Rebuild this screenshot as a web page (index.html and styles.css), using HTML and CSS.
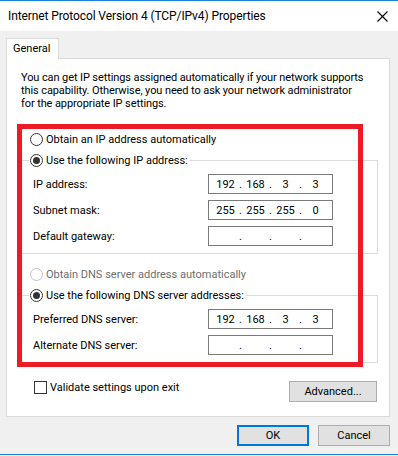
FILE: index.html
```html
<!DOCTYPE html>
<html lang="en">
<head>
    <meta charset="UTF-8">
    <title>Internet Protocol Version 4 (TCP/IPv4) Properties</title>
    <link rel="stylesheet" href="styles.css">
</head>
<body>
    <div class="window">
        <div class="titlebar">
            <span class="title">Internet Protocol Version 4 (TCP/IPv4) Properties</span>
            <svg class="close" width="11" height="11" viewBox="0 0 11 11">
                <path d="M0.5 0.5 L10.5 10.5 M10.5 0.5 L0.5 10.5" stroke="#000" stroke-width="1.1" fill="none"/>
            </svg>
        </div>

        <div class="dialog">
            <div class="tab">General</div>
            <div class="panel">
                <p class="intro">
                    You can get IP settings assigned automatically if your network supports<br>
                    this capability. Otherwise, you need to ask your network administrator<br>
                    for the appropriate IP settings.
                </p>

                <div class="opt opt-first">
                    <span class="radio"></span>Obtain an IP address automatically
                </div>

                <fieldset class="group">
                    <legend><span class="opt"><span class="radio on"></span>Use the following IP address:</span></legend>
                    <div class="field">
                        <span>IP address:</span>
                        <div class="ip"><span class="seg">192</span><span class="dot">.</span><span class="seg">168</span><span class="dot">.</span><span class="seg">3</span><span class="dot">.</span><span class="seg">3</span></div>
                    </div>
                    <div class="field">
                        <span>Subnet mask:</span>
                        <div class="ip"><span class="seg">255</span><span class="dot">.</span><span class="seg">255</span><span class="dot">.</span><span class="seg">255</span><span class="dot">.</span><span class="seg">0</span></div>
                    </div>
                    <div class="field">
                        <span>Default gateway:</span>
                        <div class="ip"><span class="seg"></span><span class="dot">.</span><span class="seg"></span><span class="dot">.</span><span class="seg"></span><span class="dot">.</span><span class="seg"></span></div>
                    </div>
                </fieldset>

                <div class="opt opt-dns disabled">
                    <span class="radio off"></span>Obtain DNS server address automatically
                </div>

                <fieldset class="group">
                    <legend><span class="opt"><span class="radio on"></span>Use the following DNS server addresses:</span></legend>
                    <div class="field">
                        <span>Preferred DNS server:</span>
                        <div class="ip"><span class="seg">192</span><span class="dot">.</span><span class="seg">168</span><span class="dot">.</span><span class="seg">3</span><span class="dot">.</span><span class="seg">3</span></div>
                    </div>
                    <div class="field">
                        <span>Alternate DNS server:</span>
                        <div class="ip"><span class="seg"></span><span class="dot">.</span><span class="seg"></span><span class="dot">.</span><span class="seg"></span><span class="dot">.</span><span class="seg"></span></div>
                    </div>
                </fieldset>

                <div class="extras">
                    <label class="check-label"><span class="check"></span>Validate settings upon exit</label>
                    <button class="btn btn-adv">Advanced...</button>
                </div>

                <div class="mark"></div>
            </div>

            <div class="footer">
                <button class="btn btn-main btn-default">OK</button>
                <button class="btn btn-main">Cancel</button>
            </div>
        </div>
    </div>
</body>
</html>
```

FILE: styles.css
```css
body {
    margin: 0;
    background: #f0f0f0;
    font-family: "Segoe UI", Roboto, "Liberation Sans", sans-serif;
    font-size: 11px;
    line-height: 13px;
    color: #000;
}

.window {
    height: 455px;
    box-sizing: border-box;
    border-top: 1px solid #1883d7;
    border-bottom: 1px solid #1883d7;
}

.titlebar {
    height: 30px;
    background: #fff;
    display: flex;
    align-items: center;
    justify-content: space-between;
    padding: 0 10px 0 8px;
}

.title {
    font-size: 12px;
    letter-spacing: -0.1px;
}

.dialog {
    padding: 7px 8px 0 6px;
}

.tab {
    position: relative;
    z-index: 1;
    width: 53px;
    height: 21px;
    box-sizing: border-box;
    border: 1px solid #d9d9d9;
    border-bottom: 0;
    background: #fff;
    padding: 3px 0 0 6px;
    margin-bottom: -1px;
}

.panel {
    position: relative;
    border: 1px solid #d9d9d9;
    background: #fff;
    padding: 12px 12px 14px 12px;
}

.intro {
    margin: 0 0 0 2px;
    letter-spacing: -0.1px;
}

.opt {
    display: flex;
    align-items: center;
    gap: 3px;
    height: 13px;
}

.opt-first {
    margin: 23px 0 0 11px;
}

.opt-dns {
    margin: 14px 0 0 11px;
}

.disabled {
    color: #6d6d6d;
}

.radio {
    flex: none;
    width: 13px;
    height: 13px;
    box-sizing: border-box;
    border: 1px solid #333;
    border-radius: 50%;
    background: #fff;
    display: flex;
    align-items: center;
    justify-content: center;
}

.radio.on::after {
    content: "";
    width: 7px;
    height: 7px;
    border-radius: 50%;
    background: #333;
}

.radio.off {
    border-color: #c2c2c2;
}

.group {
    margin: 8px 0 0 0;
    width: 359px;
    min-width: 0;
    box-sizing: border-box;
    border: 1px solid #dcdcdc;
    padding: 7px 44px 7px 13px;
}

.group legend {
    padding: 0 2px 0 1px;
    margin-left: -4px;
}

.field {
    display: grid;
    grid-template-columns: 1fr 125px;
    align-items: center;
}

.field + .field {
    margin-top: 6px;
}

.ip {
    height: 20px;
    box-sizing: border-box;
    border: 1px solid #7a7a7a;
    display: flex;
    align-items: center;
    padding-left: 3px;
}

.seg {
    width: 27px;
    text-align: center;
}

.dot {
    width: 3px;
    text-align: center;
}

.extras {
    display: flex;
    justify-content: space-between;
    align-items: flex-start;
    margin-top: 18px;
    padding-left: 15px;
}

.check-label {
    display: flex;
    align-items: center;
    gap: 3px;
}

.check {
    width: 13px;
    height: 13px;
    box-sizing: border-box;
    border: 1px solid #333;
    background: #fff;
}

.btn {
    height: 21px;
    box-sizing: border-box;
    border: 1px solid #adadad;
    background: #e1e1e1;
    font: inherit;
    color: #000;
    padding: 0;
}

.btn-adv {
    width: 88px;
}

.btn-main {
    width: 72px;
}

.btn-default {
    border: 2px solid #0078d7;
}

.footer {
    display: flex;
    justify-content: flex-end;
    gap: 9px;
    padding-top: 8px;
}

.mark {
    position: absolute;
    left: 10px;
    top: 65px;
    width: 346px;
    height: 243px;
    box-sizing: border-box;
    border: 5px solid #ed1c24;
    pointer-events: none;
}
```
